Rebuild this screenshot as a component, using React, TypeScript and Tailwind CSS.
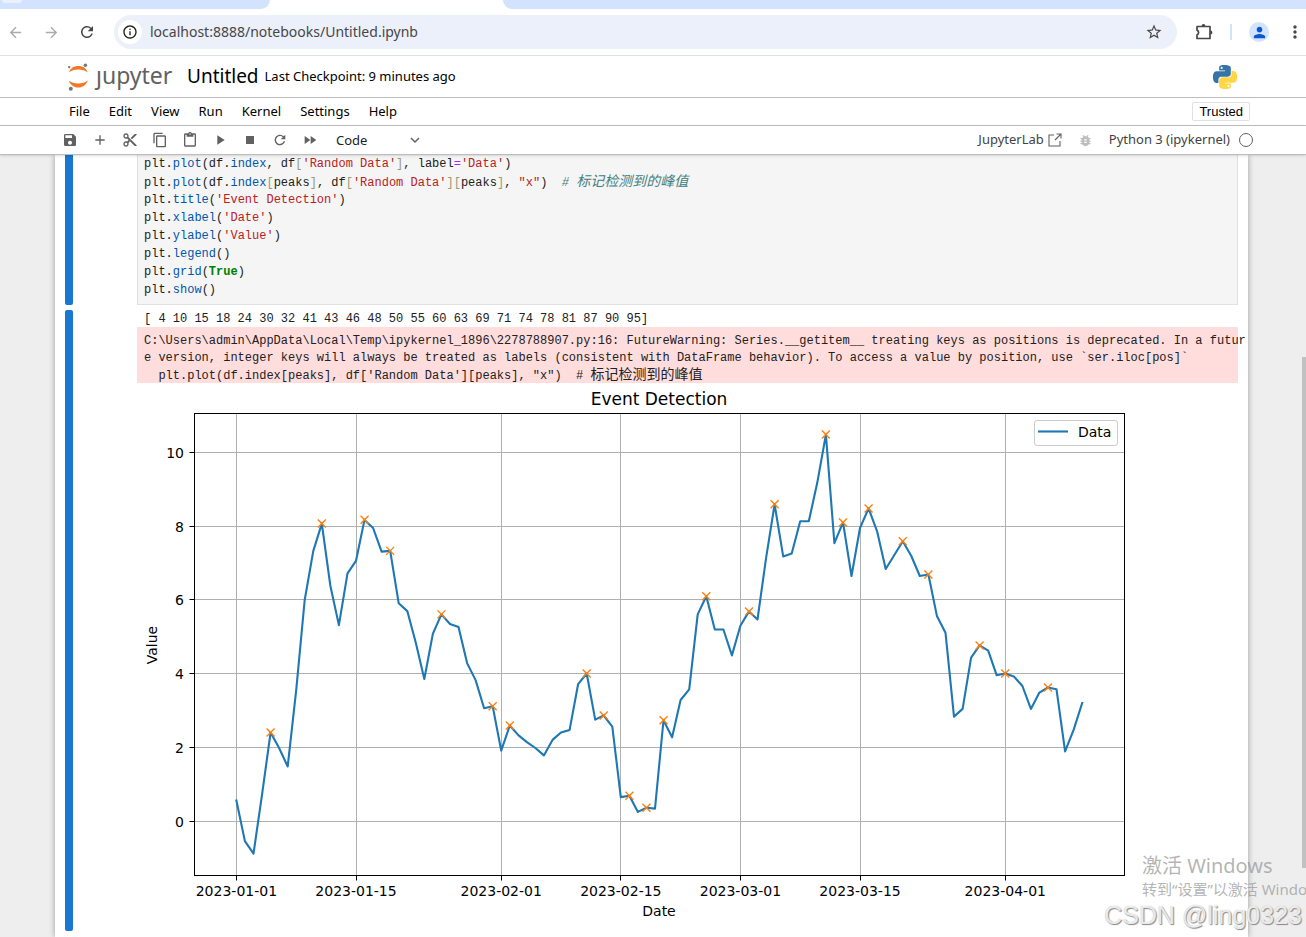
import * as React from 'react';
import {
  MdAdd,
  MdArrowBack,
  MdArrowForward,
  MdBugReport,
  MdContentCopy,
  MdContentCut,
  MdContentPaste,
  MdFastForward,
  MdInfoOutline,
  MdMoreVert,
  MdPerson,
  MdPlayArrow,
  MdRefresh,
  MdSave,
  MdStarOutline,
  MdStop,
} from 'react-icons/md';

const MENUS = ['File', 'Edit', 'View', 'Run', 'Kernel', 'Settings', 'Help'];

const TOOLS = [
  { label: 'Save', icon: MdSave },
  { label: 'Insert cell', icon: MdAdd },
  { label: 'Cut', icon: MdContentCut },
  { label: 'Copy', icon: MdContentCopy },
  { label: 'Paste', icon: MdContentPaste },
  { label: 'Run', icon: MdPlayArrow },
  { label: 'Interrupt', icon: MdStop },
  { label: 'Restart', icon: MdRefresh },
  { label: 'Restart and run all', icon: MdFastForward },
];

type Kind = 'fn' | 'str' | 'br' | 'op' | 'kw' | 'cmt' | 'cjk';
type Token = string | [Kind, string];

const KIND_CLASS: Record<Kind, string> = {
  fn: 'text-[#0055aa]',
  str: 'text-[#ba2121]',
  br: 'text-[#999977]',
  op: 'text-[#aa22ff]',
  kw: 'font-bold text-[#008000]',
  cmt: 'italic text-[#408080]',
  cjk: 'italic text-[14px] text-[#408080]',
};

const CODE: Token[][] = [
  ['plt.', ['fn', 'plot'], '(df.', ['fn', 'index'], ', df', ['br', '['], ['str', "'Random Data'"], ['br', ']'], ', label', ['op', '='], ['str', "'Data'"], ')'],
  ['plt.', ['fn', 'plot'], '(df.', ['fn', 'index'], ['br', '['], 'peaks', ['br', ']'], ', df', ['br', '['], ['str', "'Random Data'"], ['br', ']['], 'peaks', ['br', ']'], ', ', ['str', '"x"'], ')  ', ['cmt', '# '], ['cjk', '标记检测到的峰值']],
  ['plt.', ['fn', 'title'], '(', ['str', "'Event Detection'"], ')'],
  ['plt.', ['fn', 'xlabel'], '(', ['str', "'Date'"], ')'],
  ['plt.', ['fn', 'ylabel'], '(', ['str', "'Value'"], ')'],
  ['plt.', ['fn', 'legend'], '()'],
  ['plt.', ['fn', 'grid'], '(', ['kw', 'True'], ')'],
  ['plt.', ['fn', 'show'], '()'],
];

const WARNING = [
  'C:\\Users\\admin\\AppData\\Local\\Temp\\ipykernel_1896\\2278788907.py:16: FutureWarning: Series.__getitem__ treating keys as positions is deprecated. In a futur',
  'e version, integer keys will always be treated as labels (consistent with DataFrame behavior). To access a value by position, use `ser.iloc[pos]`',
];

const VALUES = [
  0.57, -0.53, -0.87, 0.72, 2.41, 1.99, 1.49, 3.56, 6.0, 7.33,
  8.07, 6.38, 5.32, 6.72, 7.06, 8.17, 7.95, 7.31, 7.33, 5.91,
  5.7, 4.84, 3.86, 5.09, 5.61, 5.35, 5.27, 4.29, 3.83, 3.07,
  3.12, 1.92, 2.6, 2.34, 2.15, 1.99, 1.79, 2.21, 2.41, 2.48,
  3.72, 4.01, 2.76, 2.87, 2.57, 0.66, 0.7, 0.26, 0.37, 0.35,
  2.74, 2.28, 3.29, 3.58, 5.61, 6.1, 5.2, 5.2, 4.5, 5.3,
  5.69, 5.47, 7.14, 8.59, 7.18, 7.26, 8.13, 8.13, 9.18, 10.48,
  7.54, 8.1, 6.65, 7.95, 8.48, 7.86, 6.84, 7.21, 7.59, 7.19,
  6.65, 6.69, 5.57, 5.11, 2.84, 3.05, 4.44, 4.77, 4.63, 3.96,
  4.01, 3.93, 3.67, 3.05, 3.49, 3.63, 3.58, 1.9, 2.48, 3.21,
];

const PEAKS = [4, 10, 15, 18, 24, 30, 32, 41, 43, 46, 48, 50, 55, 60, 63, 69, 71, 74, 78, 81, 87, 90, 95];

const DATE_TICKS = [
  { day: 0, label: '2023-01-01' },
  { day: 14, label: '2023-01-15' },
  { day: 31, label: '2023-02-01' },
  { day: 45, label: '2023-02-15' },
  { day: 59, label: '2023-03-01' },
  { day: 73, label: '2023-03-15' },
  { day: 90, label: '2023-04-01' },
];

const VALUE_TICKS = [0, 2, 4, 6, 8, 10];

const xOf = (day: number) => 92.4 + day * 8.543;
const yOf = (value: number) => 433.5 - value * 36.92;
// gridlines sit on whole device pixels
const snap = (n: number) => Math.floor(n) + 0.5;

function JupyterMark() {
  return (
    <svg viewBox="0 0 24 28" className="h-7 w-6" aria-hidden="true">
      <path d="M2.800 9.500C4.500 5 8 3 12.300 3s7.800 2 9.500 6.500C19.500 7.500 16 6.500 12.300 6.500S5 7.500 2.800 9.500z" fill="#f37726" />
      <path d="M2.800 17.500C5 19.500 8.500 20.500 12.300 20.500s7.200-1 9.500-3c-1.700 4.800-5.200 7-9.500 7s-7.800-2.200-9.500-7z" fill="#f37726" />
      <circle cx="19.400" cy="2.200" r="1.700" fill="#757575" />
      <circle cx="3.200" cy="4.100" r="1.200" fill="#757575" />
      <circle cx="4.800" cy="25.700" r="2" fill="#757575" />
    </svg>
  );
}

function PythonLogo() {
  return (
    <svg viewBox="0 0 24 24" className="h-6 w-6" aria-label="Python">
      <path
        fill="#3674a8"
        d="M14.25.18l.9.2.73.26.59.3.45.32.34.34.25.34.16.33.1.3.04.26.02.2-.01.13V8.5l-.05.63-.13.55-.21.46-.26.38-.3.31-.33.25-.35.19-.35.14-.33.1-.3.07-.26.04-.21.02H8.77l-.69.05-.59.14-.5.22-.41.27-.33.32-.27.35-.2.36-.15.37-.1.35-.07.32-.04.27-.02.21v3.06H3.17l-.21-.03-.28-.07-.32-.12-.35-.18-.36-.26-.36-.36-.35-.46-.32-.59-.28-.73-.21-.88-.14-1.05-.05-1.23.06-1.22.16-1.04.24-.87.32-.71.36-.57.4-.44.42-.33.42-.24.4-.16.36-.1.32-.05.24-.01h.16l.06.01h8.16v-.83H6.18l-.01-2.75-.02-.37.05-.34.11-.31.17-.28.25-.26.31-.23.38-.2.44-.18.51-.15.58-.12.64-.1.71-.06.77-.04.84-.02 1.27.05zm-6.3 1.98l-.23.33-.08.41.08.41.23.34.33.22.41.09.41-.09.33-.22.23-.34.08-.41-.08-.41-.23-.33-.33-.22-.41-.09-.41.09z"
      />
      <path
        fill="#ffd644"
        d="M21.04 6.11l.28.06.32.12.35.18.36.27.36.35.35.47.32.59.28.73.21.88.14 1.04.05 1.23-.06 1.23-.16 1.04-.24.86-.32.71-.36.57-.4.45-.42.33-.42.24-.4.16-.36.09-.32.05-.24.02-.16-.01h-8.22v.82h5.84l.01 2.76.02.36-.05.34-.11.31-.17.29-.25.25-.31.24-.38.2-.44.17-.51.15-.58.13-.64.09-.71.07-.77.04-.84.01-1.27-.04-1.07-.14-.9-.2-.73-.25-.59-.3-.45-.33-.34-.34-.25-.34-.16-.33-.1-.3-.04-.25-.02-.2.01-.13v-5.34l.05-.64.13-.54.21-.46.26-.38.3-.32.33-.24.35-.2.35-.14.33-.1.3-.06.26-.04.21-.02.13-.01h5.84l.69-.05.59-.14.5-.21.41-.28.33-.32.27-.35.2-.36.15-.36.1-.35.07-.32.04-.28.02-.21V6.07h2.09l.14.01zm-6.47 14.25l-.23.33-.08.41.08.41.23.33.33.23.41.08.41-.08.33-.23.23-.33.08-.41-.08-.41-.23-.33-.33-.23-.41-.08-.41.08z"
      />
    </svg>
  );
}

function BrowserBar() {
  return (
    <div className="bg-white">
      <div className="flex h-[9px]">
        <div className="w-[270px] rounded-br-[9px] bg-[#d3e3fd]">
          <div className="ml-0.5 h-[3px] w-5 rounded-b-full bg-[#e9f1fe]" />
        </div>
        <div className="w-[233px]" />
        <div className="flex-1 rounded-bl-[9px] bg-[#d3e3fd]" />
      </div>
      <div className="flex h-[46px] items-center pl-1.5 pr-px text-[#474747]">
        <button aria-label="Back" className="flex w-[18px] justify-center text-[#ababab]"><MdArrowBack size={17} /></button>
        <button aria-label="Forward" className="ml-[18px] flex w-[18px] justify-center text-[#ababab]"><MdArrowForward size={17} /></button>
        <button aria-label="Reload" className="ml-[18px] flex w-[18px] justify-center"><MdRefresh size={18} /></button>
        <div className="mx-[18px] flex h-[34px] flex-1 items-center rounded-full bg-[#ecf0fa]">
          <button aria-label="Site information" className="ml-1 mr-2 flex h-6 w-6 items-center justify-center rounded-full bg-white text-[#1f1f1f]">
            <MdInfoOutline size={16} />
          </button>
          <input
            aria-label="Address"
            defaultValue="localhost:8888/notebooks/Untitled.ipynb"
            className="min-w-0 flex-1 bg-transparent text-[14px] leading-5 text-[#474747] outline-none"
          />
          <button aria-label="Bookmark" className="mr-3.5"><MdStarOutline size={18} /></button>
        </div>
        <button aria-label="Extensions" className="flex">
          <svg viewBox="0 0 18 18" className="h-[18px] w-[18px]" fill="none" stroke="currentColor" strokeWidth="1.700">
            <path d="M2 3.500h13v12H2v-3.600a2.600 2.600 0 0 0 0-4.800z" strokeLinejoin="round" />
            <path d="M6.600 3a1.900 1.900 0 0 1 3.800 0zM15.500 7.600a1.900 1.900 0 0 1 0 3.800z" fill="currentColor" stroke="none" />
          </svg>
        </button>
        <div className="mx-[17px] h-4 w-0.5 bg-[#d3e3fd]" />
        <button aria-label="Profile" className="flex h-5 w-5 items-center justify-center rounded-full bg-[#d3e3fd] text-[#0b57d0]">
          <MdPerson size={17} />
        </button>
        <button aria-label="Browser menu" className="ml-4"><MdMoreVert size={20} /></button>
      </div>
    </div>
  );
}

function NotebookHeader() {
  return (
    <header>
      <div className="flex h-[43px] items-center border-y border-t-[#e0e0e0] border-b-[#bdbdbd] bg-white pl-[66px] pr-[69px]">
        <a href="#tree" aria-label="jupyter" className="flex items-center">
          <JupyterMark />
          <span className="ml-1.5 w-[76px] pb-1 text-[23px] leading-7 text-[#616161]">ȷupyter</span>
        </a>
        <h1 className="ml-[15px] text-[19px]">Untitled</h1>
        <span className="ml-1.5 flex-1 text-[13px]">Last Checkpoint: 9 minutes ago</span>
        <PythonLogo />
      </div>
      <div className="flex h-7 items-center border-b border-[#bdbdbd] bg-white pl-[60px] pr-14">
        <nav className="flex flex-1 gap-px">
          {MENUS.map((name) => (
            <button key={name} className="px-[9px] text-[13px]">{name}</button>
          ))}
        </nav>
        <button className="h-[19px] rounded-xs border border-[#e0e0e0] px-1.5 font-['Liberation_Sans',sans-serif] text-[13px] leading-4">Trusted</button>
      </div>
      <div className="relative flex h-[29px] items-center border-b border-[#bdbdbd] bg-white pl-[55px] pr-[53px] text-[#616161] shadow-sm">
        {TOOLS.map(({ label, icon: Icon }) => (
          <button key={label} aria-label={label} className="flex w-[30px] justify-center"><Icon size={16} /></button>
        ))}
        <div className="relative ml-[11px] mr-auto flex items-center">
          <select aria-label="Cell type" className="h-5 w-[86px] appearance-none bg-transparent text-[13px] leading-5 text-[#212121]">
            <option>Code</option>
            <option>Markdown</option>
            <option>Raw</option>
          </select>
          <svg viewBox="0 0 10 10" className="pointer-events-none absolute right-0.5 h-2.5 w-2.5" fill="none" stroke="currentColor" strokeWidth="1.500">
            <path d="M1 3l4 4 4-4" />
          </svg>
        </div>
        <a href="#lab" className="flex items-center text-[13px] text-[#424242]">
          JupyterLab
          <svg viewBox="0 0 14 14" className="ml-1 h-3.5 w-3.5" fill="none" stroke="#616161" strokeWidth="1.100">
            <path d="M6 2H1v11h11V8M8.500 1H13v4.500M13 1L7 7" />
          </svg>
        </a>
        <button aria-label="Debugger" className="mx-4 text-[#bdbdbd]"><MdBugReport size={15} /></button>
        <button className="flex items-center text-[13px] text-[#424242]">
          Python 3 (ipykernel)
          <span className="ml-[9px] h-3.5 w-3.5 rounded-full border border-[#616161]" />
        </button>
      </div>
    </header>
  );
}

function CodeLine({ tokens }: { tokens: Token[] }) {
  return (
    <div className="h-[18px] whitespace-pre leading-[18px]">
      {tokens.map((token, i) =>
        typeof token === 'string'
          ? <span key={i}>{token}</span>
          : <span key={i} className={KIND_CLASS[token[0]]}>{token[1]}</span>
      )}
    </div>
  );
}

function EventChart() {
  const line = VALUES.map((v, i) => `${xOf(i).toFixed(1)},${yOf(v).toFixed(1)}`).join(' ');

  return (
    <svg
      viewBox="0 0 993 531"
      className="block w-[993px] max-w-full font-['DejaVu_Sans',sans-serif] text-[14px]"
      role="img"
      aria-label="Event Detection"
    >
      <text x="515" y="17" textAnchor="middle" className="text-[17px]">Event Detection</text>

      {DATE_TICKS.map(({ day, label }) => (
        <g key={label}>
          <path d={`M${snap(xOf(day))} 25.500V487.500`} stroke="#b0b0b0" />
          <path d={`M${snap(xOf(day))} 487.500v5`} stroke="#000" />
          <text x={xOf(day)} y="508" textAnchor="middle">{label}</text>
        </g>
      ))}
      {VALUE_TICKS.map((value) => (
        <g key={value}>
          <path d={`M50.500 ${snap(yOf(value))}H980.500`} stroke="#b0b0b0" />
          <path d={`M45.500 ${snap(yOf(value))}h5`} stroke="#000" />
          <text x="40" y={snap(yOf(value)) + 5} textAnchor="end">{value}</text>
        </g>
      ))}

      <polyline points={line} fill="none" stroke="#1f77b4" strokeWidth="2.100" strokeLinejoin="round" strokeLinecap="square" />
      {PEAKS.map((i) => (
        <path
          key={i}
          d={`M${xOf(i) - 4} ${yOf(VALUES[i]) - 4}l8 8m0 -8l-8 8`}
          stroke="#ff7f0e"
          strokeWidth="1.400"
        />
      ))}

      <rect x="50.500" y="25.500" width="930" height="462" fill="none" stroke="#000" />

      <rect x="890.500" y="32.500" width="83" height="25" rx="2.500" fill="#fff" fillOpacity="0.8" stroke="#ccc" />
      <path d="M894 43.500h30" stroke="#1f77b4" strokeWidth="2.100" />
      <text x="934" y="49">Data</text>

      <text x="515" y="528" textAnchor="middle">Date</text>
      <text transform="translate(13 257) rotate(-90)" textAnchor="middle">Value</text>
    </svg>
  );
}

function Notebook() {
  return (
    <main className="flex flex-1 bg-[#eeeeee]">
      <div className="min-w-0 flex-1 pl-[55px] pr-[54px]">
        <div className="h-full bg-white px-2.5 pb-1.5 font-['Liberation_Mono','Noto_Sans_CJK_SC',monospace] text-[12px] text-[#212121] shadow-[0_0_6px_rgba(0,0,0,0.35)]">
          <section className="flex">
            <div className="w-2 rounded-b-xs bg-[#1976d2]" />
            <div className="ml-16 min-w-0 flex-1 border border-t-0 border-[#e0e0e0] bg-[#f5f5f5] pb-[5px] pl-1.5">
              {CODE.map((tokens, i) => <CodeLine key={i} tokens={tokens} />)}
            </div>
          </section>

          <section className="mt-[5px] flex">
            <div className="w-2 rounded-xs bg-[#1976d2]" />
            <div className="ml-16 min-w-0 flex-1 pb-3">
              <pre className="h-[17px] pl-[7px] font-[inherit] leading-[18px]">[ 4 10 15 18 24 30 32 41 43 46 48 50 55 60 63 69 71 74 78 81 87 90 95]</pre>
              <div className="bg-[#ffdddd] pl-[7px] pt-[5px]">
                {WARNING.map((text) => (
                  <pre key={text} className="h-[17px] font-[inherit] leading-[18px]">{text}</pre>
                ))}
                <pre className="h-[17px] font-[inherit] leading-[18px]">
                  {'  plt.plot(df.index[peaks], df[\'Random Data\'][peaks], "x")  # '}
                  <span className="text-[14px]">标记检测到的峰值</span>
                </pre>
              </div>
              <div className="pl-[7px] pt-[5px]">
                <EventChart />
              </div>
            </div>
          </section>
        </div>
      </div>
      <div className="w-1 pt-[202px]">
        <div className="h-[511px] bg-[#c1c1c1]" />
      </div>
    </main>
  );
}

export default function App() {
  return (
    <div className="relative flex min-h-screen flex-col overflow-hidden font-['Noto_Sans','Noto_Sans_CJK_SC',sans-serif] text-black">
      <BrowserBar />
      <NotebookHeader />
      <Notebook />

      <div className="pointer-events-none absolute bottom-[38px] left-[1142px] whitespace-nowrap text-[#9b9b9b]/75">
        <p className="text-[20px] leading-[26px]">激活 Windows</p>
        <p className="text-[15px] leading-[20px]">转到“设置”以激活 Windows</p>
      </div>
      <p className="pointer-events-none absolute bottom-1.5 right-1 font-['Liberation_Sans',sans-serif] text-[25px] leading-8 text-white/80 [text-shadow:1px_1px_1px_#888,0_0_1px_#aaa]">
        CSDN @ling0323
      </p>
    </div>
  );
}
